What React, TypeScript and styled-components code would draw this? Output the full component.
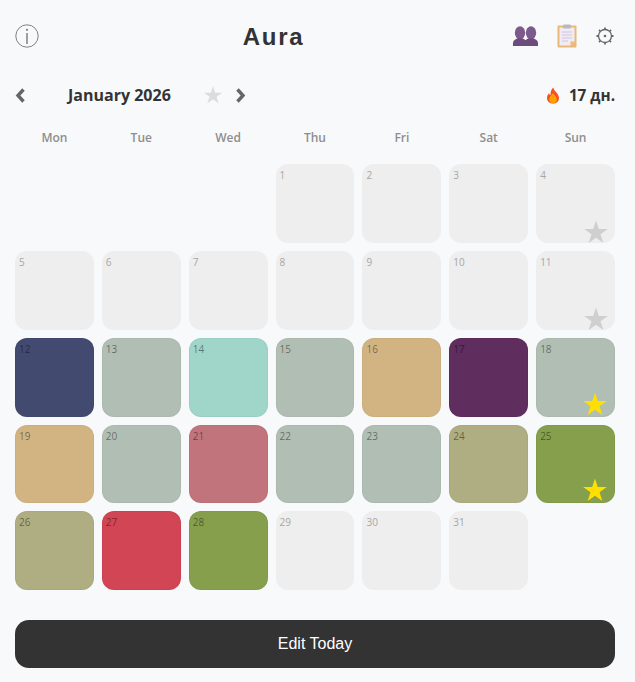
import styled, { createGlobalStyle } from 'styled-components';

const GlobalStyle = createGlobalStyle`
    html, body {
        margin: 0;
        padding: 0;
        background: #f8f9fb;
    }
    * {
        box-sizing: border-box;
    }
`;

const Page = styled.div`
    width: 635px;
    height: 682px;
    padding: 0 20px 0 15px;
    background: #f8f9fb;
    font-family: 'Open Sans', sans-serif;
    color: #333;
    display: flex;
    flex-direction: column;
`;

const Header = styled.header`
    height: 72px;
    display: flex;
    justify-content: space-between;
    align-items: center;
`;

const Title = styled.h1`
    margin: 2px 0 0 -5px;
    font-family: 'Liberation Sans', sans-serif;
    font-size: 24px;
    font-weight: 700;
    letter-spacing: 1.7px;
    color: #333;
`;

const HeaderActions = styled.div`
    display: flex;
    justify-content: flex-end;
    align-items: center;
    gap: 19px;
    margin-right: 1px;
`;

const InfoButton = styled.div`
    width: 24px;
    height: 24px;
    color: #808080;
`;

const MonthBar = styled.div`
    height: 34px;
    margin-top: 6px;
    display: flex;
    align-items: center;
`;

const MonthNav = styled.div`
    display: flex;
    align-items: center;
`;

const Chevron = styled.svg`
    width: 11px;
    height: 15px;
    color: #666;
`;

const NextChevron = styled(Chevron)`
    margin-left: 12px;
`;

const MonthName = styled.div`
    margin: 0 32px 0 42px;
    font-size: 16px;
    font-weight: 700;
    white-space: nowrap;
    color: #333;
`;

const Streak = styled.div`
    margin-left: auto;
    display: flex;
    align-items: center;
    gap: 9px;
    font-size: 15.3px;
    font-weight: 700;
    color: #333;
`;

const WeekDays = styled.div`
    display: grid;
    grid-template-columns: repeat(7, 1fr);
    gap: 8px;
    margin-top: 18px;
    margin-bottom: 18px;
`;

const WeekDay = styled.div`
    text-align: center;
    font-size: 12px;
    font-weight: 600;
    line-height: 16px;
    color: #8e8e8e;
`;

const Grid = styled.div`
    display: grid;
    grid-template-columns: repeat(7, 1fr);
    gap: 8px;
`;

const BlankCells = styled.div`
    grid-column: span 3;
`;

const Cell = styled.div<{ $bg?: string }>`
    position: relative;
    aspect-ratio: 1;
    border-radius: 12px;
    background: ${(p) => p.$bg || '#eeeeee'};
    box-shadow: ${(p) => (p.$bg ? 'inset 0 0 0 1px rgba(0, 0, 0, 0.03)' : 'none')};
    padding: 4px;
    font-size: 10px;
    line-height: 14px;
    color: ${(p) => (p.$bg ? 'rgba(0, 0, 0, 0.45)' : '#a6a6a6')};
`;

const Badge = styled.svg<{ $filled: boolean }>`
    position: absolute;
    right: ${(p) => (p.$filled ? '7px' : '6px')};
    bottom: ${(p) => (p.$filled ? '0' : '-2px')};
    width: 26px;
    height: 26px;
    color: ${(p) => (p.$filled ? '#ffdf00' : '#cfcfcf')};
`;

const EditButton = styled.button`
    height: 48px;
    margin-top: 30px;
    border: none;
    border-radius: 14px;
    background: #333;
    color: #fff;
    font-family: 'Liberation Sans', sans-serif;
    font-size: 16px;
`;

const GREEN = '#b0beb3';
const SAND = '#d1b482';
const OLIVE = '#afad82';
const MOSS = '#859f4d';

const moods: Record<number, string> = {
    12: '#434a70',
    13: GREEN,
    14: '#a0d5ca',
    15: GREEN,
    16: SAND,
    17: '#5f2d5e',
    18: GREEN,
    19: SAND,
    20: GREEN,
    21: '#c1747c',
    22: GREEN,
    23: GREEN,
    24: OLIVE,
    25: MOSS,
    26: OLIVE,
    27: '#d14555',
    28: MOSS,
};

const weekDays = ['Mon', 'Tue', 'Wed', 'Thu', 'Fri', 'Sat', 'Sun'];
const starred = [4, 11, 18, 25];
const days = Array.from({ length: 31 }, (_, i) => i + 1);

const STAR =
    'M12 1.3L14.59 9.24 22.94 9.25 16.18 14.16 18.76 22.1 12 17.2 5.24 22.1 7.82 14.16 1.06 9.25 9.41 9.24z';

function GroupIcon() {
    return (
        <svg width="25" height="20" viewBox="0 0 25 20" fill="#7d5a8c">
            <ellipse cx="7" cy="6.800" rx="5.200" ry="6.500" />
            <ellipse cx="18" cy="6.800" rx="5.200" ry="6.500" />
            <path d="M0 20v-3c0-2.500 2.500-3.800 5-4.700h4c1.500.5 2.800 1.100 3.500 2 .7-.9 2-1.500 3.500-2h4c2.500.9 5 2.200 5 4.700v3z" fill="#6c4c7c" />
        </svg>
    );
}

function ClipboardIcon() {
    return (
        <svg width="20" height="24" viewBox="0 0 20 24">
            <rect x="0.500" y="1.500" width="19" height="22" rx="1" fill="#e8b978" />
            <path d="M2.500 3.500h15v14l-4 4h-11z" fill="#f0ebf4" />
            <path d="M13.500 21.500l4-4h-4z" fill="#e8b978" />
            <rect x="6" y="0.500" width="8" height="4" rx="1" fill="#b9b9b9" />
            <path d="M5 8h10M5 11h10M5 14h10M5 17h6" stroke="#cfc6d8" strokeWidth="1" />
        </svg>
    );
}

function GearIcon() {
    return (
        <svg width="18" height="18" viewBox="0 0 18 18" fill="none" stroke="#666">
            <circle cx="9" cy="9" r="6.500" strokeWidth="1.300" />
            <circle cx="9" cy="9" r="1.300" fill="#666" stroke="none" />
            <path
                d="M9 .5v2M9 15.500v2M.5 9h2M15.500 9h2M3 3l1.200 1.200M13.800 13.800L15 15M15 3l-1.200 1.200M4.200 13.800L3 15"
                strokeWidth="1.800"
            />
        </svg>
    );
}

function FlameIcon() {
    return (
        <svg width="14" height="17" viewBox="0 0 14 17">
            <path
                d="M7.300.500c.5 2.600 2 3.600 3.500 5.400 1.300 1.600 2.200 3.100 2.200 5C13 14.200 10.300 16.500 7 16.500S1 14.200 1 10.900c0-2 .9-3.500 2-4.700.2 1 .7 1.700 1.500 2.100C4.300 5 5.300 2.300 7.300.500z"
                fill="#f4511e"
            />
            <path
                d="M7 6c.8 1.900 3.800 3.500 3.800 6.500 0 2.300-1.700 3.800-3.800 3.800s-3.800-1.500-3.800-3.800C3.200 9.700 6.100 8.100 7 6z"
                fill="#ffa000"
            />
        </svg>
    );
}

export default function App() {
    return (
        <>
            <GlobalStyle />
            <Page>
                <Header>
                    <InfoButton>
                        <svg width="24" height="24" viewBox="0 0 24 24" fill="none" stroke="currentColor">
                            <circle cx="12" cy="12" r="11.200" strokeWidth="1" />
                            <path d="M12 9v11" strokeWidth="1.500" />
                            <circle cx="12" cy="5.800" r="1.100" fill="currentColor" stroke="none" />
                        </svg>
                    </InfoButton>
                    <Title>Aura</Title>
                    <HeaderActions>
                        <GroupIcon />
                        <ClipboardIcon />
                        <GearIcon />
                    </HeaderActions>
                </Header>

                <MonthBar>
                    <MonthNav>
                        <Chevron viewBox="0 0 11 15" fill="none" stroke="currentColor" strokeWidth="3.400">
                            <path d="M8.500 1.500L3 7.500l5.500 6" />
                        </Chevron>
                        <MonthName>January 2026</MonthName>
                        <svg width="20" height="20" viewBox="0 0 24 24" fill="#dcdcdc">
                            <path d={STAR} />
                        </svg>
                        <NextChevron viewBox="0 0 11 15" fill="none" stroke="currentColor" strokeWidth="3.400">
                            <path d="M2.500 1.500L8 7.500l-5.500 6" />
                        </NextChevron>
                    </MonthNav>
                    <Streak>
                        <FlameIcon />
                        <span>17 дн.</span>
                    </Streak>
                </MonthBar>

                <WeekDays>
                    {weekDays.map((d) => (
                        <WeekDay key={d}>{d}</WeekDay>
                    ))}
                </WeekDays>

                <Grid>
                    <BlankCells />
                    {days.map((d) => (
                        <Cell key={d} $bg={moods[d]}>
                            {d}
                            {starred.includes(d) && (
                                <Badge viewBox="0 0 24 24" fill="currentColor" $filled={d > 12}>
                                    <path d={STAR} />
                                </Badge>
                            )}
                        </Cell>
                    ))}
                </Grid>

                <EditButton>Edit Today</EditButton>
            </Page>
        </>
    );
}
